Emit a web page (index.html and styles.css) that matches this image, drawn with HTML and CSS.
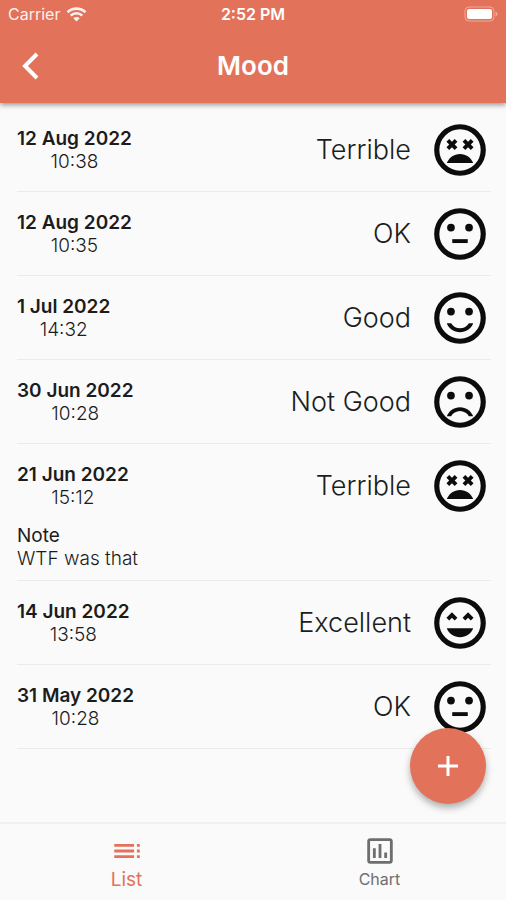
FILE: index.html
```html
<!DOCTYPE html>
<html lang="en">
<head>
    <meta charset="UTF-8">
    <meta name="viewport" content="width=device-width, initial-scale=1.0">
    <title>Mood</title>
    <link rel="stylesheet" href="styles.css">
</head>
<body>
    <svg class="sprite" aria-hidden="true">
        <symbol id="terrible" viewBox="0 0 24 24">
            <circle class="face" cx="12" cy="12" r="9"/>
            <path d="M7.82 12l1.06-1.06L9.94 12 11 10.94 9.94 9.88 11 8.82 9.94 7.76 8.88 8.82 7.82 7.76 6.76 8.82l1.06 1.06-1.06 1.06z"/>
            <path d="M14.06 12l1.06-1.06L16.18 12l1.06-1.06-1.06-1.06 1.06-1.06-1.06-1.06-1.06 1.06-1.06-1.06L13 8.82l1.06 1.06L13 10.94z"/>
            <path d="M12 13.5c-2.33 0-4.31 1.46-5.11 3.5h10.22c-.8-2.04-2.78-3.5-5.11-3.5z"/>
        </symbol>
        <symbol id="ok" viewBox="0 0 24 24">
            <circle class="face" cx="12" cy="12" r="9"/>
            <circle cx="8.5" cy="9.5" r="1.5"/>
            <circle cx="15.5" cy="9.5" r="1.5"/>
            <path d="M9 14h6v1.5H9z"/>
        </symbol>
        <symbol id="good" viewBox="0 0 24 24">
            <circle class="face" cx="12" cy="12" r="9"/>
            <circle cx="8.5" cy="9.5" r="1.5"/>
            <circle cx="15.5" cy="9.5" r="1.5"/>
            <path d="M12 16c-1.48 0-2.75-.81-3.45-2H6.88c.8 2.05 2.79 3.5 5.12 3.5s4.32-1.45 5.12-3.5h-1.67c-.69 1.19-1.97 2-3.45 2z"/>
        </symbol>
        <symbol id="notGood" viewBox="0 0 24 24">
            <circle class="face" cx="12" cy="12" r="9"/>
            <circle cx="8.5" cy="9.5" r="1.5"/>
            <circle cx="15.5" cy="9.5" r="1.5"/>
            <path d="M12 14c-2.33 0-4.32 1.45-5.12 3.5h1.67c.69-1.19 1.97-2 3.45-2s2.75.81 3.45 2h1.67c-.8-2.05-2.79-3.5-5.12-3.5z"/>
        </symbol>
        <symbol id="excellent" viewBox="0 0 24 24">
            <circle class="face" cx="12" cy="12" r="9"/>
            <path d="M8.88 9.94L9.94 11 11 9.94 8.88 7.82 6.76 9.94 7.82 11z"/>
            <path d="M13 9.94L14.06 11l1.06-1.06L16.18 11l1.06-1.06-2.12-2.12z"/>
            <path d="M12 17.5c2.33 0 4.31-1.46 5.11-3.5H6.89c.8 2.04 2.78 3.5 5.11 3.5z"/>
        </symbol>
    </svg>

    <div class="app">
        <header class="topBar">
            <div class="statusBar">
                <div class="carrier">
                    <span>Carrier</span>
                    <svg class="wifi" viewBox="0 0 20 15" aria-hidden="true">
                        <path d="M1 5.2a13 13 0 0 1 18 0M4.2 8.6a8.4 8.4 0 0 1 11.6 0"/>
                        <path class="wifiDot" d="M6.8 11.2a4.6 4.6 0 0 1 6.4 0L10 14.6z"/>
                    </svg>
                </div>
                <div class="clock">2:52 PM</div>
                <svg class="battery" viewBox="0 0 34 16" aria-hidden="true">
                    <rect class="batteryCase" x="1" y="1" width="29" height="14" rx="4"/>
                    <rect x="3" y="3" width="25" height="10" rx="2"/>
                    <path class="batteryTip" d="M31.5 5.5q2 .5 2 2.500t-2 2.500z"/>
                </svg>
            </div>
            <div class="titleBar">
                <button class="back" type="button" aria-label="Back">
                    <svg viewBox="0 0 20 28" aria-hidden="true"><path d="M17 2L5 14l12 12"/></svg>
                </button>
                <h1>Mood</h1>
            </div>
        </header>

        <main>
            <ul class="entries">
                <li class="entry">
                    <div class="row">
                        <div class="when"><b>12 Aug 2022</b><span>10:38</span></div>
                        <div class="mood">Terrible</div>
                        <svg class="smiley" aria-hidden="true"><use href="#terrible"/></svg>
                    </div>
                </li>
                <li class="entry">
                    <div class="row">
                        <div class="when"><b>12 Aug 2022</b><span>10:35</span></div>
                        <div class="mood">OK</div>
                        <svg class="smiley" aria-hidden="true"><use href="#ok"/></svg>
                    </div>
                </li>
                <li class="entry">
                    <div class="row">
                        <div class="when"><b>1 Jul 2022</b><span>14:32</span></div>
                        <div class="mood">Good</div>
                        <svg class="smiley" aria-hidden="true"><use href="#good"/></svg>
                    </div>
                </li>
                <li class="entry">
                    <div class="row">
                        <div class="when"><b>30 Jun 2022</b><span>10:28</span></div>
                        <div class="mood">Not Good</div>
                        <svg class="smiley" aria-hidden="true"><use href="#notGood"/></svg>
                    </div>
                </li>
                <li class="entry">
                    <div class="row">
                        <div class="when"><b>21 Jun 2022</b><span>15:12</span></div>
                        <div class="mood">Terrible</div>
                        <svg class="smiley" aria-hidden="true"><use href="#terrible"/></svg>
                    </div>
                    <div class="note">
                        <h2>Note</h2>
                        <p>WTF was that</p>
                    </div>
                </li>
                <li class="entry">
                    <div class="row">
                        <div class="when"><b>14 Jun 2022</b><span>13:58</span></div>
                        <div class="mood">Excellent</div>
                        <svg class="smiley" aria-hidden="true"><use href="#excellent"/></svg>
                    </div>
                </li>
                <li class="entry">
                    <div class="row">
                        <div class="when"><b>31 May 2022</b><span>10:28</span></div>
                        <div class="mood">OK</div>
                        <svg class="smiley" aria-hidden="true"><use href="#ok"/></svg>
                    </div>
                </li>
            </ul>
        </main>

        <div class="bottom">
            <button class="add" type="button" aria-label="Add mood">
                <svg viewBox="0 0 24 24" aria-hidden="true"><path d="M12 2v20M2 12h20"/></svg>
            </button>
            <nav class="tabs">
                <a class="tab active" href="#list" aria-current="page">
                    <svg viewBox="0 0 24 24" aria-hidden="true"><path d="M3 9h14V7H3zm0 4h14v-2H3zm0 4h14v-2H3zm16 0h2v-2h-2zm0-10v2h2V7zm0 6h2v-2h-2z"/></svg>
                    <span>List</span>
                </a>
                <a class="tab" href="#chart">
                    <svg viewBox="0 0 24 24" aria-hidden="true"><path d="M9 17H7v-7h2zm4 0h-2V7h2zm4 0h-2v-4h2zm2 2H5V5h14zm0-16H5c-1.100 0-2 .9-2 2v14c0 1.100.9 2 2 2h14c1.100 0 2-.9 2-2V5c0-1.100-.9-2-2-2z"/></svg>
                    <span>Chart</span>
                </a>
            </nav>
        </div>
    </div>
</body>
</html>
```
FILE: styles.css
```css
:root{
    --accent: #E27259;
    --background: #FAFAFA;
    --line: #EBEBEB;
    --fontColor: #1C1C1C;
}
*{
    box-sizing: border-box;
}
body{
    margin: 0;
    background: var(--background);
    color: var(--fontColor);
    font-family: Inter, "Liberation Sans", sans-serif;
    font-size: 19px;
    line-height: 23px;
}
button{
    border: 0;
    padding: 0;
    background: none;
    color: inherit;
    cursor: pointer;
}
svg{
    display: block;
    fill: currentColor;
}
.sprite{
    position: absolute;
    width: 0;
    height: 0;
}
.app{
    display: flex;
    flex-direction: column;
    height: 100vh;
}
.topBar{
    z-index: 1;
    background: var(--accent);
    color: #FFFFFF;
    box-shadow: 0 2px 5px rgba(0,0,0,0.4);
}
.statusBar{
    display: grid;
    grid-template-columns: 1fr auto 1fr;
    align-items: center;
    height: 28px;
    padding: 0 8px;
    font-size: 16px;
}
.carrier{
    display: flex;
    align-items: center;
    gap: 6px;
    opacity: 0.9;
}
.wifi{
    width: 21px;
    height: 15px;
    fill: none;
    stroke: currentColor;
    stroke-width: 2.6;
}
.wifiDot{
    fill: currentColor;
    stroke: none;
}
.clock{
    font-weight: 600;
}
.battery{
    justify-self: end;
    width: 34px;
    height: 16px;
}
.batteryCase{
    fill: none;
    stroke: currentColor;
    opacity: 0.4;
}
.batteryTip{
    opacity: 0.4;
}
.titleBar{
    display: grid;
    grid-template-columns: 60px 1fr 60px;
    align-items: center;
    height: 75px;
}
.back{
    display: grid;
    place-items: center;
    height: 60px;
}
.back svg{
    width: 20px;
    height: 28px;
    fill: none;
    stroke: currentColor;
    stroke-width: 4;
}
h1{
    margin: 0;
    font-size: 26px;
    line-height: 32px;
    font-weight: 600;
    text-align: center;
}
main{
    flex: 1;
    min-height: 0;
    overflow-y: auto;
}
.entries{
    list-style: none;
    margin: 0;
    padding: 5px 15px 0 17px;
}
.entry{
    padding: 11px 0 10px;
    border-bottom: 1px solid var(--line);
}
.row{
    display: flex;
    align-items: center;
}
.when{
    display: flex;
    flex-direction: column;
    align-items: center;
}
.when b{
    font-weight: 600;
}
.when span{
    font-weight: 300;
}
.mood{
    flex: 1;
    font-size: 27px;
    line-height: 32px;
    font-weight: 300;
    text-align: right;
}
.smiley{
    width: 62px;
    height: 62px;
    margin-left: 18px;
    color: #0C0C0C;
}
.face{
    fill: none;
    stroke: currentColor;
    stroke-width: 2;
}
.note{
    margin-top: 7px;
}
.note h2{
    margin: 0;
    font-size: 19px;
    font-weight: 400;
}
.note p{
    margin: 0;
    font-weight: 300;
}
.bottom{
    position: relative;
    border-top: 2px solid #F0F0F0;
}
/* floats over the end of the list */
.add{
    position: absolute;
    right: 20px;
    bottom: calc(100% + 20px);
    display: grid;
    place-items: center;
    width: 76px;
    height: 76px;
    border-radius: 50%;
    background: var(--accent);
    color: #FFFFFF;
    box-shadow: 0 4px 7px rgba(0,0,0,0.3);
}
.add svg{
    width: 24px;
    height: 24px;
    stroke: currentColor;
    stroke-width: 3;
}
.tabs{
    display: grid;
    grid-template-columns: 1fr 1fr;
    height: 76px;
}
.tab{
    display: flex;
    flex-direction: column;
    align-items: center;
    padding-top: 10px;
    color: #6E6E6E;
    font-size: 16px;
    text-decoration: none;
}
.tab svg{
    width: 34px;
    height: 34px;
}
.active{
    color: var(--accent);
    font-size: 19px;
}
```
